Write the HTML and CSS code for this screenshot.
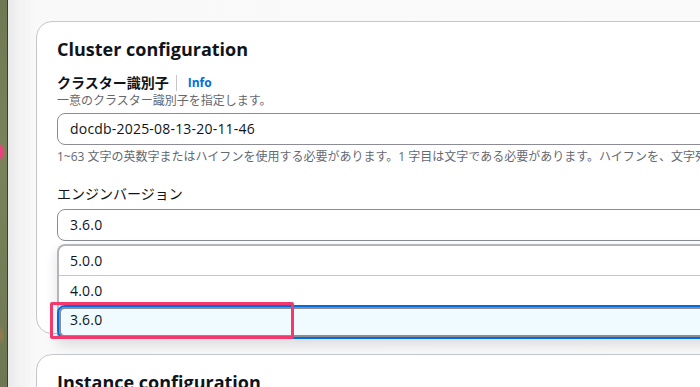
FILE: index.html
```html
<!DOCTYPE html>
<html lang="ja">
<head>
<meta charset="utf-8">
<title>Cluster configuration</title>
<link rel="stylesheet" href="styles.css">
</head>
<body>
  <div class="desk"></div>
  <main class="window">
    <section class="card">
      <h2 class="card-title">Cluster configuration</h2>
      <div class="field">
        <div class="label-row">
          <span class="label">クラスター識別子</span>
          <span class="sep"></span>
          <span class="info">Info</span>
        </div>
        <div class="desc">一意のクラスター識別子を指定します。</div>
        <div class="input">docdb-2025-08-13-20-11-46</div>
        <div class="hint">1~63 文字の英数字またはハイフンを使用する必要があります。1 字目は文字である必要があります。ハイフンを、文字列の最後に使用したり、2 つ連続して使用したりすることはできません。</div>
      </div>
      <div class="field engine">
        <div class="label-plain">エンジンバージョン</div>
        <div class="select-wrap">
          <div class="input select">3.6.0</div>
          <ul class="dropdown">
            <li class="option">5.0.0</li>
            <li class="option">4.0.0</li>
            <li class="option selected">3.6.0</li>
          </ul>
          <div class="highlight"></div>
        </div>
      </div>
    </section>
    <section class="card">
      <h2 class="card-title">Instance configuration</h2>
    </section>
  </main>
</body>
</html>
```

FILE: styles.css
```css
* { box-sizing: border-box; }
html, body { margin: 0; padding: 0; height: 100%; }
body {
  display: flex;
  width: 700px;
  height: 387px;
  overflow: hidden;
  font-family: "Open Sans", "Noto Sans CJK JP", sans-serif;
  color: #0f141a;
}
.desk {
  flex: 0 0 8px;
  background:
    radial-gradient(ellipse 5px 9px at 0px 152px, #e8457a 0, #e8457a 60%, rgba(232,69,122,0) 100%),
    radial-gradient(ellipse 4px 10px at 1px 335px, #9a7a4a 0, rgba(154,122,74,0) 100%),
    linear-gradient(180deg, #6f7852 0%, #79835b 40%, #6e7752 100%);
  border-right: 1px solid #3b3d36;
}
.window {
  flex: 1;
  overflow: hidden;
  padding: 21px 0 0 28px;
  background: linear-gradient(90deg, #e9e9eb 0px, #f3f3f4 12px, #f9f9fa 28px, #fafafa 100%);
}
.card {
  width: 760px;
  background: #fff;
  border: 1px solid #c6c6cd;
  border-radius: 16px;
  padding: 15px 20px 92px 20px;
}
.card + .card {
  margin-top: 20px;
  padding-bottom: 40px;
}
.card-title {
  margin: 0;
  font-size: 18px;
  line-height: 24px;
  font-weight: 700;
  color: #0f141a;
}
.field { margin-top: 12px; }
.label-row {
  display: flex;
  align-items: center;
  height: 20px;
}
.label {
  font-size: 14px;
  font-weight: 700;
  line-height: 20px;
}
.sep {
  width: 1px;
  height: 16px;
  background: #c6c6cd;
  margin: 0 11px 0 7px;
}
.info {
  font-size: 12px;
  font-weight: 700;
  color: #006ce0;
  line-height: 16px;
}
.desc {
  font-size: 12px;
  line-height: 16px;
  color: #656871;
  margin-top: 0;
}
.input {
  margin-top: 4px;
  height: 32px;
  border: 1px solid #8c8c94;
  border-radius: 8px;
  padding: 0 12px;
  font-size: 14px;
  line-height: 30px;
  letter-spacing: 0.2px;
  color: #0f141a;
  background: #fff;
}
.hint {
  margin-top: 4px;
  font-size: 12px;
  line-height: 16px;
  color: #656871;
  white-space: nowrap;
}
.engine { margin-top: 19px; }
.label-plain {
  font-size: 14px;
  line-height: 20px;
}
.select-wrap {
  position: relative;
  margin-top: 5px;
}
.select-wrap .input { margin-top: 0; }
.dropdown {
  position: absolute;
  z-index: 2;
  top: calc(100% + 3px);
  left: 0;
  right: 0;
  margin: 0;
  padding: 0;
  list-style: none;
  background: #fff;
  border: 2px solid #b4b4bb;
  border-bottom: 0;
  border-radius: 8px 8px 0 0;
  box-shadow: 0 6px 14px rgba(0, 7, 22, 0.12);
}
.option {
  height: 30px;
  padding: 0 11px;
  font-size: 14px;
  line-height: 29px;
  letter-spacing: 0.2px;
  border-bottom: 1px solid #c6c6cd;
}
.option.selected {
  height: 34px;
  margin: -1px -2px 0 -2px;
  padding: 0 11px;
  line-height: 26px;
  border: 2px solid #006ce0;
  border-radius: 8px;
  background: #f0fbff;
  box-shadow: inset 0 0 0 2px #8c8c94;
}
.highlight {
  position: absolute;
  z-index: 3;
  left: -7px;
  top: 93px;
  width: 244px;
  height: 37px;
  border: 3px solid #f2386d;
  border-radius: 2px;
}
```
